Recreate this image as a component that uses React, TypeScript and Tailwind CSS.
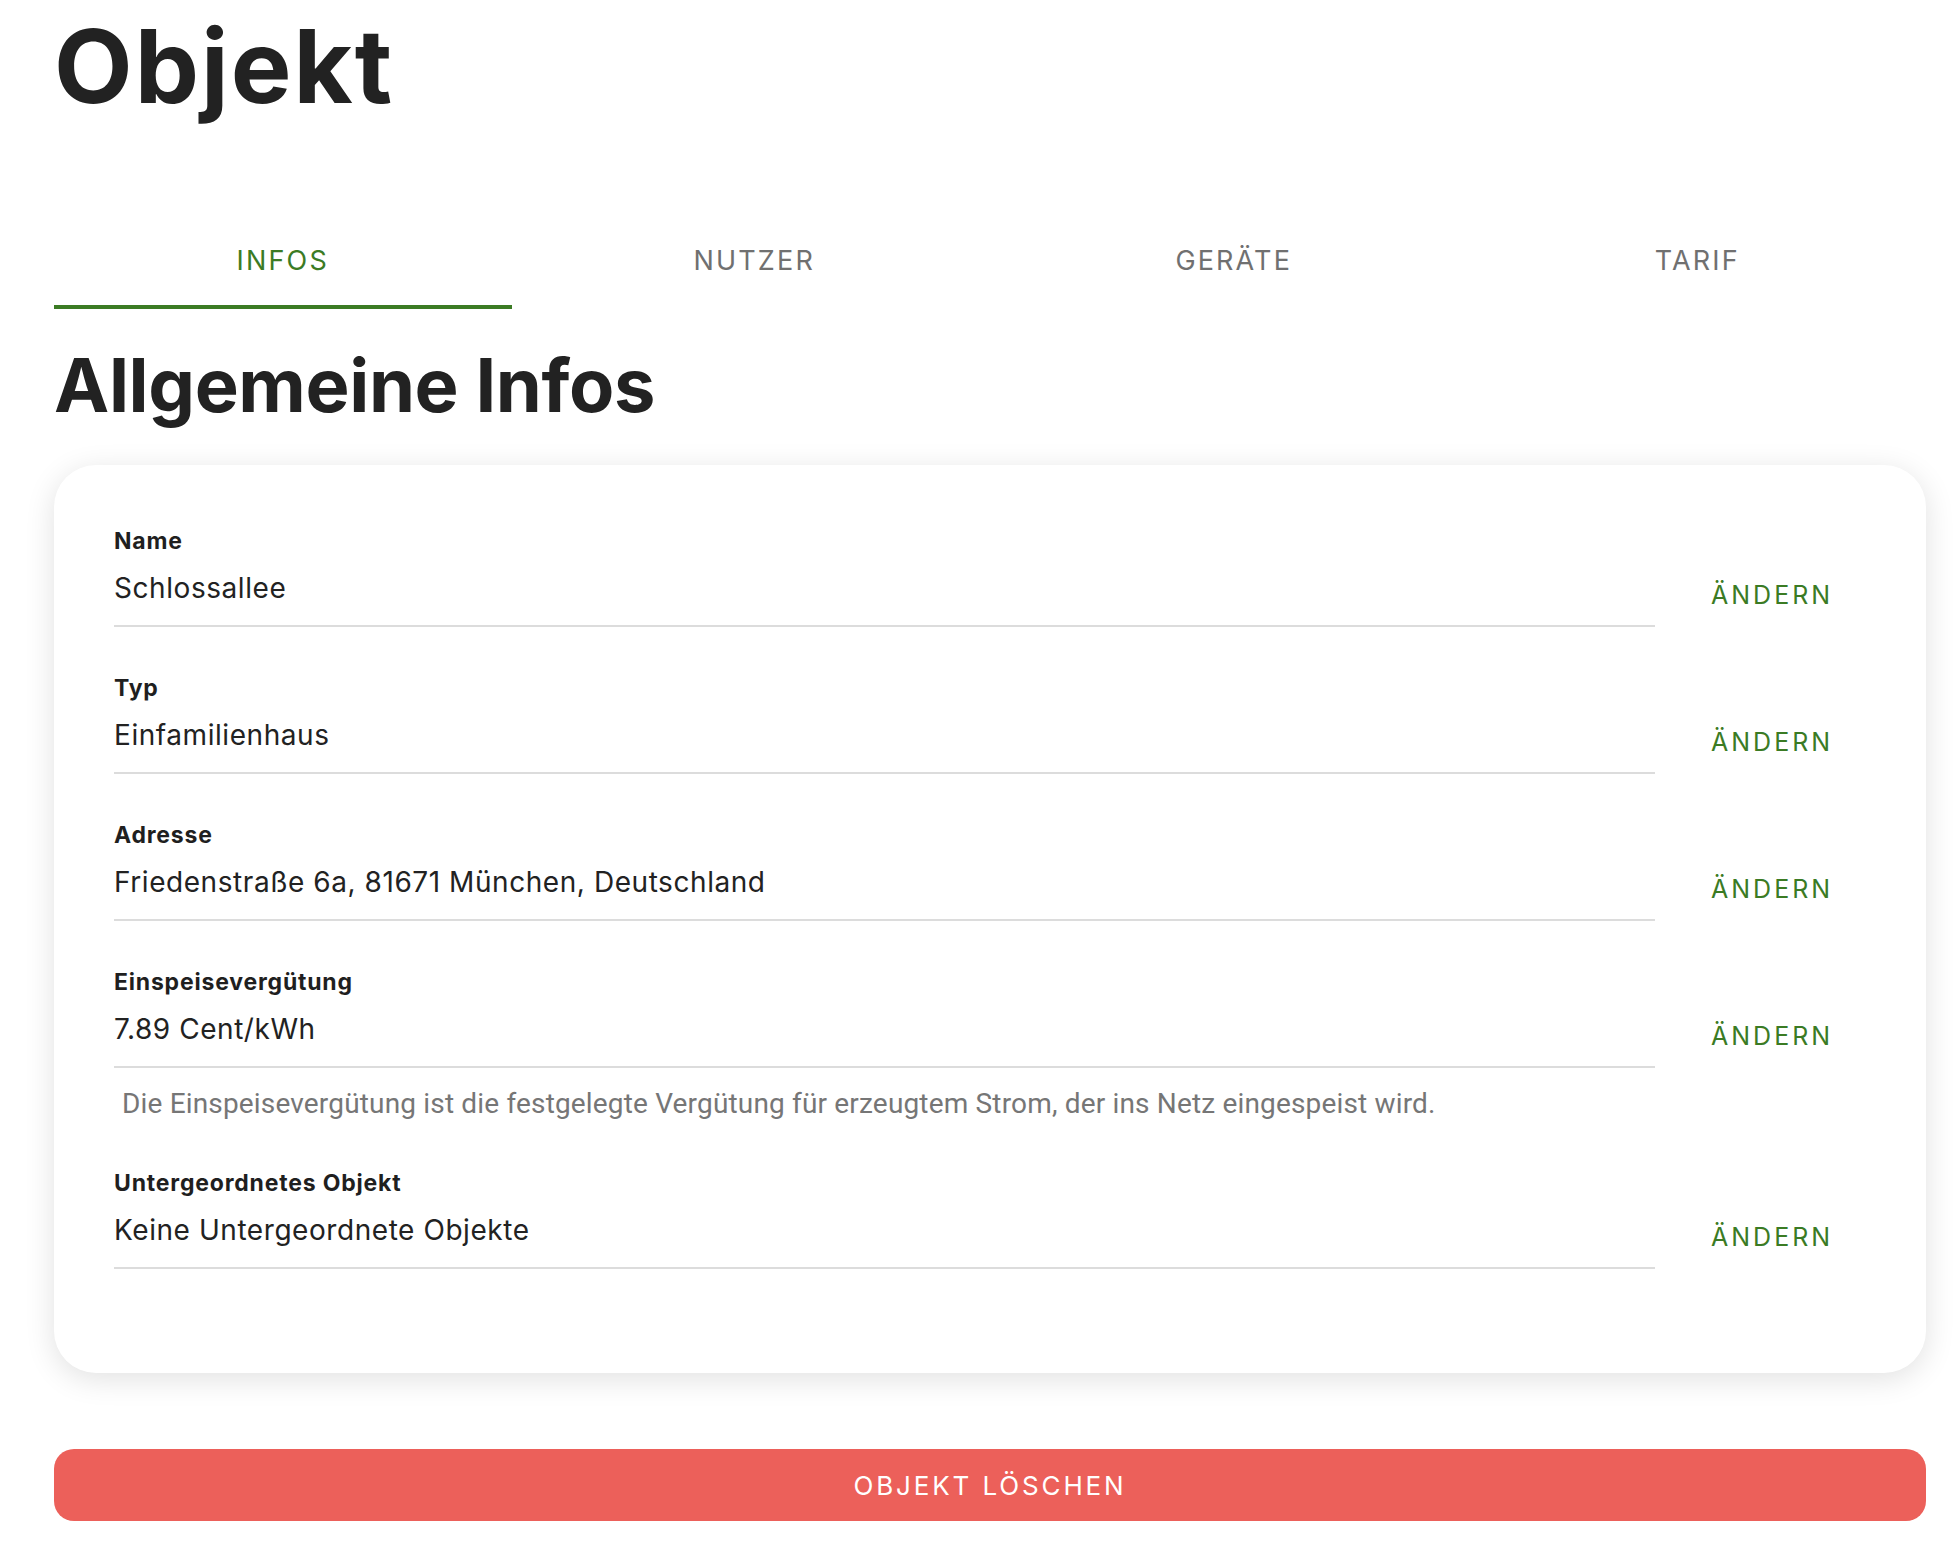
import React from "react";

const rows = [
  { label: "Name", value: "Schlossallee" },
  { label: "Typ", value: "Einfamilienhaus" },
  { label: "Adresse", value: "Friedenstraße 6a, 81671 München, Deutschland" },
  {
    label: "Einspeisevergütung",
    value: "7.89 Cent/kWh",
    helper:
      "Die Einspeisevergütung ist die festgelegte Vergütung für erzeugtem Strom, der ins Netz eingespeist wird.",
  },
  { label: "Untergeordnetes Objekt", value: "Keine Untergeordnete Objekte" },
];

const tabs = ["INFOS", "NUTZER", "GERÄTE", "TARIF"];

export default function App() {
  return (
    <div
      className="min-h-screen bg-white text-[#222222]"
      style={{ fontFamily: "Inter, 'Noto Sans', sans-serif" }}
    >
      <div className="ml-[54px] w-[1872px] pb-[36px]">
        <h1 className="pt-[15px] text-[102px] font-bold leading-none tracking-[0.02em]">
          Objekt
        </h1>

        <div className="mt-[96px] grid grid-cols-4 gap-[14px]">
          {tabs.map((t, i) => (
            <button
              key={t}
              className={
                i === 0
                  ? "flex h-[96px] items-center justify-center border-b-4 border-[#3b7b24] pt-[4px] text-[27px] font-normal tracking-[0.08em] text-[#3b7b24]"
                  : i === 2
                  ? "flex h-[96px] items-center justify-center border-b-4 border-transparent pl-[16px] pt-[4px] text-[27px] font-normal tracking-[0.08em] text-[#707070]"
                  : "flex h-[96px] items-center justify-center border-b-4 border-transparent pt-[4px] text-[27px] font-normal tracking-[0.08em] text-[#707070]"
              }
            >
              {t}
            </button>
          ))}
        </div>

        <h2 className="mt-[39px] text-[74px] font-bold leading-none tracking-[-0.005em]">
          Allgemeine Infos
        </h2>

        <div className="mt-[43px] rounded-[42px] bg-white pb-[104px] pl-[60px] pr-[95px] pt-[61px] shadow-[0_6px_30px_rgba(0,0,0,0.12)]">
          <div className="flex flex-col">
            {rows.map((r, i) => (
              <div key={r.label} className={i === 0 ? "" : r.label === "Untergeordnetes Objekt" ? "mt-[48px]" : "mt-[46px]"}>
                <div className="flex items-end">
                  <div className="flex-1 border-b-2 border-[#dcdcdc] pb-[19px]">
                    <div className="text-[23px] font-bold leading-[30px] tracking-[0.035em] text-[#1f1f1f]">
                      {r.label}
                    </div>
                    <div className="mt-[14px] text-[28px] font-normal leading-[36px] tracking-[0.02em] text-[#222222]">
                      {r.value}
                    </div>
                  </div>
                  <button className="mb-[14px] ml-[56px] w-[120px] whitespace-nowrap text-center text-[25px] font-normal leading-[36px] tracking-[0.12em] text-[#3b7b24]">
                    ÄNDERN
                  </button>
                </div>
                {r.helper && (
                  <div
                    className="ml-[8px] mt-[20px] text-[28px] leading-[32px] tracking-[0.006em] text-[#767676]"
                    style={{ fontFamily: "Roboto, 'Liberation Sans', sans-serif" }}
                  >
                    {r.helper}
                  </div>
                )}
              </div>
            ))}
          </div>
        </div>

        <button className="mt-[76px] flex h-[72px] w-full items-center justify-center rounded-[20px] bg-[#ec605a] text-[26px] font-normal tracking-[0.11em] text-white">
          OBJEKT LÖSCHEN
        </button>
      </div>
    </div>
  );
}
